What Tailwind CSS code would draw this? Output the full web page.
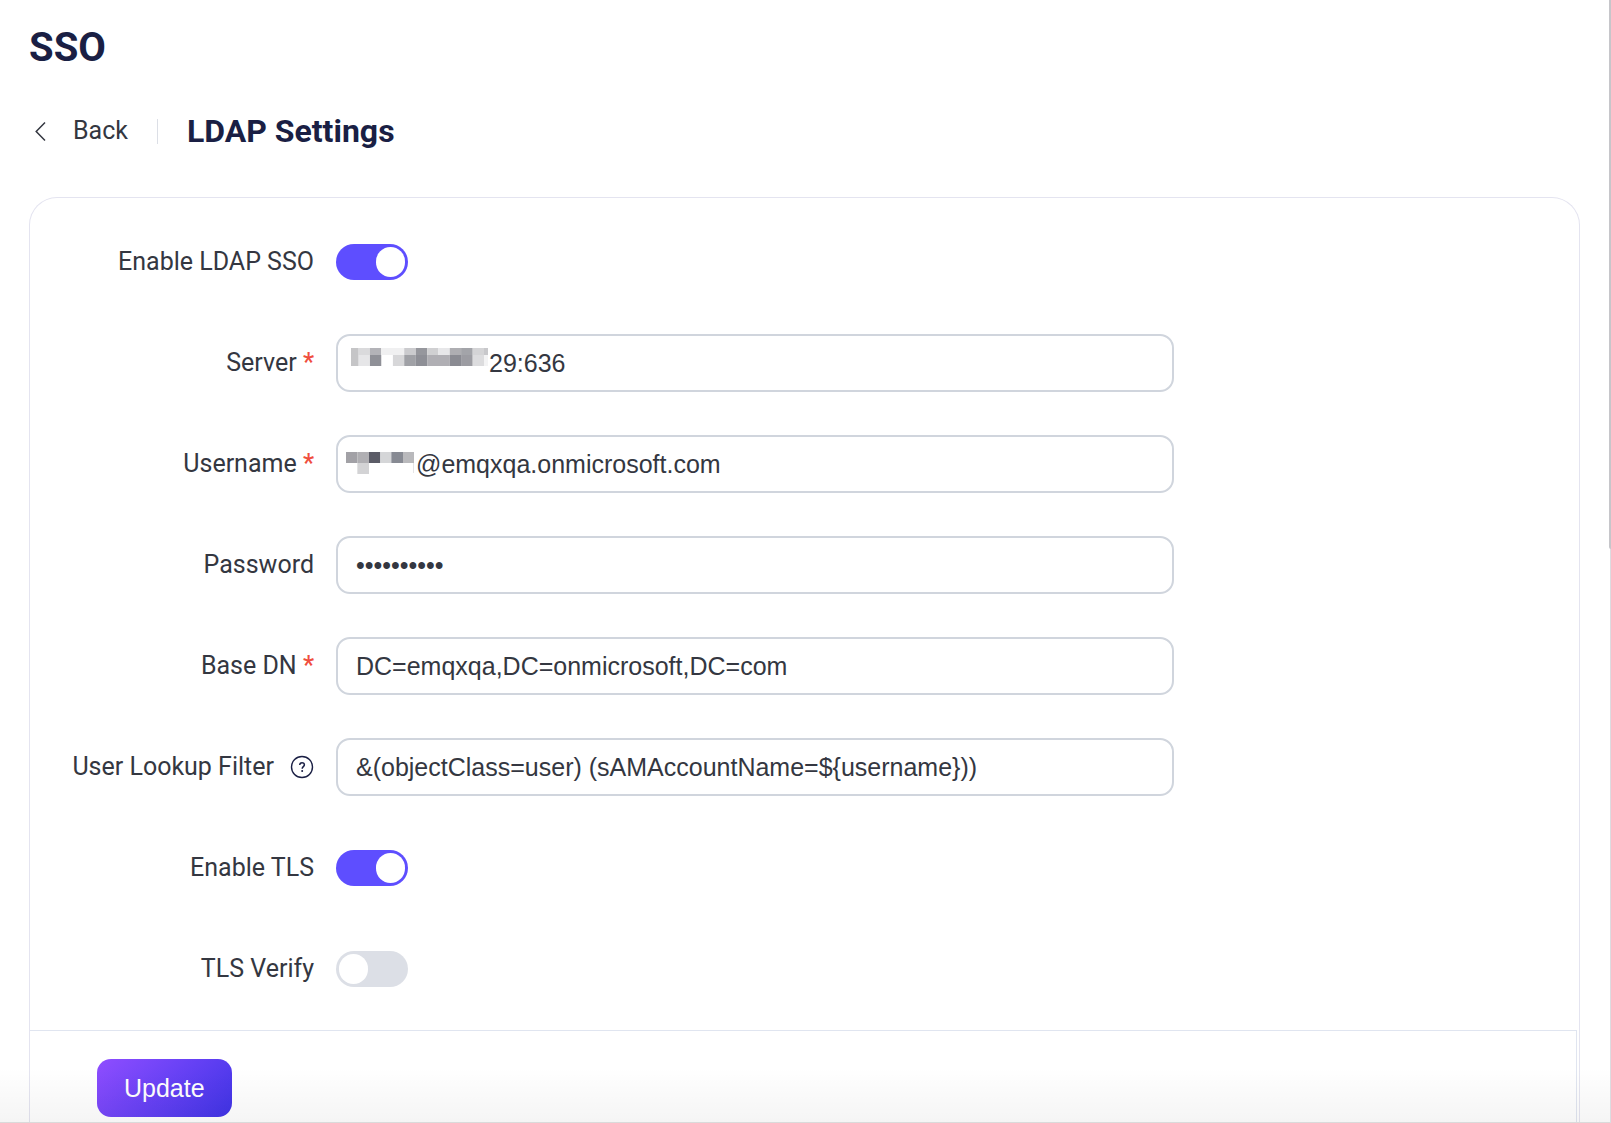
<!DOCTYPE html>
<html lang="en">
<head>
    <meta charset="UTF-8">
    <meta name="viewport" content="width=device-width, initial-scale=1.0">
    <title>SSO | LDAP Settings</title>
    <script src="https://cdn.jsdelivr.net/npm/@tailwindcss/browser@4"></script>
</head>

<body class="relative bg-white text-[#343741] font-[Roboto,sans-serif] text-[25px] leading-8">
    <div class="flex min-h-screen flex-col pr-[31px] pl-[29px] pt-[25px]">
        <h1 class="text-[40px] leading-[46px] font-bold text-[#1a1f44]">SSO</h1>

        <div class="mt-[38px] flex h-11 items-center">
            <a href="#" class="flex items-center gap-5">
                <svg class="h-6 w-6" viewBox="0 0 24 24" fill="none" stroke="currentColor" stroke-width="1.5">
                    <path d="M16 3.5 7.2 12.5 16 21.5" />
                </svg>
                <span>Back</span>
            </a>
            <span class="mx-[29px] h-[25px] w-px bg-[#dcdfe6]"></span>
            <h2 class="text-[32px] font-bold text-[#1a1f44]">LDAP Settings</h2>
        </div>

        <form class="mt-11 flex flex-1 flex-col rounded-t-[28px] border border-b-0 border-[#e4e4f0]">
            <div class="flex flex-col gap-[43px] pt-[35px] pb-8">
                <div class="flex h-[58px] items-center gap-[22px]">
                    <label for="enable" class="w-[284px] text-right">Enable LDAP SSO</label>
                    <input id="enable" type="checkbox" role="switch" checked class="h-9 w-[72px] appearance-none rounded-full bg-[#dcdfe6] p-[3px] before:block before:h-[30px] before:w-[29px] before:rounded-full before:bg-white checked:bg-[#5e4eff] checked:before:ml-auto">
                </div>

                <div class="flex h-[58px] items-center gap-[22px]">
                    <label for="server" class="w-[284px] text-right">Server <span class="font-medium text-[#f04e3e]">*</span></label>
                    <div class="relative max-w-[838px] flex-1">
                        <input id="server" type="text" value="29:636" class="h-[58px] w-full rounded-[14px] border-2 border-[#d0d5dd] pl-[151px] pr-[18px] font-['Liberation_Sans',sans-serif]">
                        <!-- masked host -->
                        <svg class="absolute left-[15px] top-[14px] h-[18px] w-[137px]" viewBox="0 0 412 54" preserveAspectRatio="none">
                            <path fill="#c5c5c7" d="M0 0h23v54H0z" />
                            <path fill="#dadadc" d="M23 0h34v21H23z" />
                            <path fill="#b3b3b8" d="M57 0h34v21H57z" />
                            <path fill="#f0f0f1" d="M91 0h69v21H91z" />
                            <path fill="#cbcbce" d="M160 0h35v21h-35z" />
                            <path fill="#96979d" d="M195 0h34v21h-34z" />
                            <path fill="#d0d0d2" d="M229 0h34v21h-34z" />
                            <path fill="#e7e7e9" d="M263 0h34v21h-34z" />
                            <path fill="#aeaeb2" d="M297 0h34v21h-34z" />
                            <path fill="#a3a4a9" d="M331 0h35v21h-35z" />
                            <path fill="#d4d4d6" d="M366 0h34v21h-34z" />
                            <path fill="#c8c8cb" d="M400 0h12v21h-12z" />
                            <path fill="#e6e6e8" d="M23 21h34v33H23z" />
                            <path fill="#8f9097" d="M57 21h34v33H57z" />
                            <path fill="#d7d7d9" d="M126 21h34v33h-34z" />
                            <path fill="#a0a1a6" d="M160 21h35v33h-35z" />
                            <path fill="#8e8f96" d="M195 21h34v33h-34z" />
                            <path fill="#b0afb4" d="M229 21h68v33h-68z" />
                            <path fill="#8a8b92" d="M297 21h34v33h-34z" />
                            <path fill="#9c9ca2" d="M331 21h35v33h-35z" />
                            <path fill="#dcdcde" d="M366 21h34v33h-34z" />
                            <path fill="#f3f3f4" d="M400 21h12v33h-12z" />
                        </svg>
                    </div>
                </div>

                <div class="flex h-[58px] items-center gap-[22px]">
                    <label for="username" class="w-[284px] text-right">Username <span class="font-medium text-[#f04e3e]">*</span></label>
                    <div class="relative max-w-[838px] flex-1">
                        <input id="username" type="text" value="@emqxqa.onmicrosoft.com" class="h-[58px] w-full rounded-[14px] border-2 border-[#d0d5dd] pl-[78px] pr-[18px] font-['Liberation_Sans',sans-serif]">
                        <!-- masked account -->
                        <svg class="absolute left-[10px] top-[17px] h-[22px] w-[68px]" viewBox="0 0 204 66" preserveAspectRatio="none">
                            <path fill="#a2a1a6" d="M0 0h34v33H0z" />
                            <path fill="#b0afb3" d="M34 0h35v33H34z" />
                            <path fill="#5b5c67" d="M69 0h34v33H69z" />
                            <path fill="#d5d6d8" d="M103 0h33v33h-33z" />
                            <path fill="#878a93" d="M136 0h35v33h-35z" />
                            <path fill="#b9b9bc" d="M171 0h33v33h-33z" />
                            <path fill="#d3d3d5" d="M34 33h35v33H34z" />
                            <path fill="#e4e4e6" d="M201 33h3v30h-3z" />
                        </svg>
                    </div>
                </div>

                <div class="flex h-[58px] items-center gap-[22px]">
                    <label for="password" class="w-[284px] text-right">Password</label>
                    <input id="password" type="password" value="ldapsecret" class="h-[58px] max-w-[838px] flex-1 rounded-[14px] border-2 border-[#d0d5dd] px-[18px] font-['Liberation_Sans',sans-serif]">
                </div>

                <div class="flex h-[58px] items-center gap-[22px]">
                    <label for="base-dn" class="w-[284px] text-right">Base DN <span class="font-medium text-[#f04e3e]">*</span></label>
                    <input id="base-dn" type="text" value="DC=emqxqa,DC=onmicrosoft,DC=com" class="h-[58px] max-w-[838px] flex-1 rounded-[14px] border-2 border-[#d0d5dd] px-[18px] font-['Liberation_Sans',sans-serif]">
                </div>

                <div class="flex h-[58px] items-center gap-[22px]">
                    <label for="filter" class="flex w-[284px] items-center justify-end gap-4">
                        User Lookup Filter
                        <svg class="h-6 w-6 text-[#1a1f44]" viewBox="0 0 24 24" fill="none" stroke="currentColor">
                            <circle cx="12" cy="12" r="10.5" stroke-width="1.4" />
                            <path d="M9.7 10C9.7 8.5 10.6 7.7 12 7.7s2.4.8 2.4 2.1c0 1.8-2.2 1.9-2.2 3.9" stroke-width="1.5" />
                            <path d="M12.2 15.1v1.8" stroke-width="1.7" />
                        </svg>
                    </label>
                    <input id="filter" type="text" value="&amp;(objectClass=user) (sAMAccountName=${username}))" class="h-[58px] max-w-[838px] flex-1 rounded-[14px] border-2 border-[#d0d5dd] px-[18px] font-['Liberation_Sans',sans-serif]">
                </div>

                <div class="flex h-[58px] items-center gap-[22px]">
                    <label for="tls" class="w-[284px] text-right">Enable TLS</label>
                    <input id="tls" type="checkbox" role="switch" checked class="h-9 w-[72px] appearance-none rounded-full bg-[#dcdfe6] p-[3px] before:block before:h-[30px] before:w-[29px] before:rounded-full before:bg-white checked:bg-[#5e4eff] checked:before:ml-auto">
                </div>

                <div class="flex h-[58px] items-center gap-[22px]">
                    <label for="tls-verify" class="w-[284px] text-right">TLS Verify</label>
                    <input id="tls-verify" type="checkbox" role="switch" class="h-9 w-[72px] appearance-none rounded-full bg-[#dcdfe6] p-[3px] before:block before:h-[30px] before:w-[29px] before:rounded-full before:bg-white checked:bg-[#5e4eff] checked:before:ml-auto">
                </div>
            </div>

            <div class="mr-[2px] flex-1 border-t border-r border-[#e0e5f0] pt-7 pb-1 pl-[67px]">
                <button type="submit" class="h-[58px] rounded-[14px] bg-linear-135 from-[#8f4dff] via-[#6741f5] to-[#3f33e6] px-[27px] font-['Liberation_Sans',sans-serif] text-white">Update</button>
            </div>
        </form>
    </div>

    <!-- bottom fade and window edges -->
    <div class="pointer-events-none absolute inset-x-0 bottom-0 h-14 border-b border-[#dadada] bg-linear-to-b from-black/0 to-black/4"></div>
    <div class="absolute inset-y-0 right-0 w-px bg-[#dcdce0]"></div>
    <div class="absolute top-0 right-0 h-[549px] w-[2px] rounded-bl bg-[#c6c6ca]"></div>
</body>
</html>
